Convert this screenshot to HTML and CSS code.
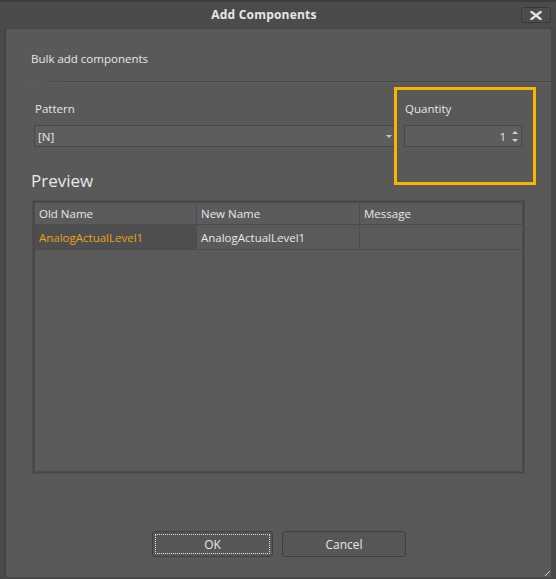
FILE: index.html
```html
<!DOCTYPE html>
<html lang="en">
<head>
    <meta charset="UTF-8">
    <meta name="viewport" content="width=device-width, initial-scale=1.0">
    <title>Add Components</title>
    <link rel="stylesheet" href="styles.css">
</head>
<body>
    <div id="dialog">
        <div id="titlebar">
            <span class="title">Add Components</span>
            <button class="close-btn" title="Close">
                <svg width="12" height="9" viewBox="0 0 12 9">
                    <path d="M1.5 1 L10.5 8 M10.5 1 L1.5 8" stroke="#e2e2e2" stroke-width="2.4" stroke-linecap="square"/>
                </svg>
            </button>
        </div>
        <div id="content">
            <p class="intro">Bulk add components</p>
            <div class="separator"></div>

            <div class="fields">
                <div class="field pattern">
                    <label>Pattern</label>
                    <div class="input combo">
                        <span>[N]</span>
                        <span class="combo-arrow"></span>
                    </div>
                </div>
                <div class="field quantity">
                    <label>Quantity</label>
                    <div class="input spin">
                        <span class="spin-value">1</span>
                        <span class="spin-buttons">
                            <span class="arrow-up"></span>
                            <span class="arrow-down"></span>
                        </span>
                    </div>
                    <div class="highlight"></div>
                </div>
            </div>

            <h2 class="preview-title">Preview</h2>
            <div class="grid">
                <div class="grid-row header">
                    <div class="cell">Old Name</div>
                    <div class="cell">New Name</div>
                    <div class="cell">Message</div>
                </div>
                <div class="grid-row">
                    <div class="cell old">AnalogActualLevel1</div>
                    <div class="cell">AnalogActualLevel1</div>
                    <div class="cell"></div>
                </div>
            </div>

            <div class="actions">
                <button class="btn focused"><span>OK</span></button>
                <button class="btn cancel"><span>Cancel</span></button>
            </div>
            <div class="grip"></div>
        </div>
    </div>
</body>
</html>
```

FILE: styles.css
```css
body {
    margin: 0;
    background-color: #444;
    font-family: "Open Sans", "Noto Sans", Arial, sans-serif;
    font-size: 11.5px;
    color: #e6e8ea;
}
#dialog {
    width: 556px;
    height: 579px;
    display: flex;
    flex-direction: column;
    background-color: #484848;
    border-top: 2px solid #3c3c3c;
    box-sizing: border-box;
}
#titlebar {
    height: 26px;
    display: flex;
    align-items: center;
    justify-content: center;
    position: relative;
    background-color: #4b4b4b;
}
.title {
    font-weight: bold;
    font-size: 12px;
    letter-spacing: 0.2px;
    margin-left: -28px;
    margin-top: -1px;
}
.close-btn {
    position: absolute;
    right: 5px;
    top: 5px;
    width: 30px;
    height: 16px;
    padding: 0;
    display: flex;
    align-items: center;
    justify-content: center;
    background-color: #4d4d4d;
    border: 1px solid #393939;
    border-radius: 3px;
}
#content {
    flex-grow: 1;
    margin: 0 5px 2px 5px;
    background-color: #595959;
    border-left: 1px solid #3f3f3f;
    border-top: 1px solid #454545;
    display: flex;
    flex-direction: column;
    position: relative;
}
.intro {
    margin: 0;
    padding: 22px 0 0 25px;
    line-height: 16px;
}
.separator {
    margin: 14px 0 0 24px;
    height: 1px;
    background: linear-gradient(to right, #595959, #474747 40px);
    border-bottom: 1px solid #5e5e5e;
}
.fields {
    display: flex;
    gap: 9px;
    padding: 18px 0 0 28px;
}
.field label {
    display: block;
    line-height: 16px;
    padding-left: 1px;
    margin-bottom: 8px;
}
.field.pattern {
    width: 361px;
}
.field.quantity {
    width: 118px;
    position: relative;
}
.input {
    height: 20px;
    border: 1px solid #484848;
    background-color: #5d5d5d;
    display: flex;
    align-items: center;
    box-sizing: content-box;
}
.combo {
    padding-left: 3px;
    justify-content: space-between;
}
.combo-arrow {
    width: 0;
    height: 0;
    border-left: 3px solid transparent;
    border-right: 3px solid transparent;
    border-top: 3px solid #c8c8c8;
    margin-right: 2px;
}
.spin {
    justify-content: flex-end;
}
.spin-value {
    margin-right: 6px;
}
.spin-buttons {
    display: flex;
    flex-direction: column;
    gap: 5px;
    margin-right: 3px;
}
.arrow-up,
.arrow-down {
    width: 0;
    height: 0;
    border-left: 3px solid transparent;
    border-right: 3px solid transparent;
}
.arrow-up {
    border-bottom: 3px solid #cfcfcf;
}
.arrow-down {
    border-top: 3px solid #cfcfcf;
}
.highlight {
    position: absolute;
    left: -10px;
    top: -14px;
    width: 136px;
    height: 92px;
    border: 3px solid #f7b500;
}
.preview-title {
    margin: 23px 0 0 25px;
    font-size: 17px;
    font-weight: normal;
    line-height: 22px;
}
.grid {
    margin: 9px 0 0 27px;
    width: 487px;
    height: 268px;
    border: 1px solid #454545;
    box-shadow: 0 0 0 1px #4f4f4f, inset 0 0 0 1px #4d4d4d;
    background-color: #5a5a5a;
    padding: 1px;
}
.grid-row {
    display: grid;
    grid-template-columns: 162px 163px 1fr;
    height: 24px;
    border-bottom: 1px solid #4d4d4d;
}
.grid-row.header {
    height: 21px;
    background-color: #5b5b5b;
    border-bottom: 1px solid #4a4a4a;
}
.cell {
    padding-left: 4px;
    display: flex;
    align-items: center;
    border-right: 1px solid #4d4d4d;
    white-space: nowrap;
}
.cell:last-child {
    border-right: none;
}
.cell.old {
    background-color: #4e4e4e;
    color: #eaa21e;
}
.actions {
    margin-top: auto;
    margin-bottom: 20px;
    display: flex;
    justify-content: center;
    gap: 9px;
    padding-left: 1px;
}
.btn {
    height: 26px;
    padding: 2px;
    border: 1px solid #3e3e3e;
    border-radius: 3px;
    background: linear-gradient(#555, #585858);
    font-family: inherit;
    font-size: 12px;
    color: #e6e8ea;
}
.btn span {
    display: flex;
    align-items: center;
    justify-content: center;
    height: 100%;
    box-sizing: border-box;
}
.btn.focused {
    width: 121px;
}
.btn.focused span {
    border: 1px dotted #e0e0e0;
}
.btn.cancel {
    width: 124px;
}
.grip {
    position: absolute;
    right: 1px;
    bottom: 1px;
    width: 10px;
    height: 10px;
    background: repeating-linear-gradient(135deg, transparent 0 2px, #cfcfcf 2px 3px, transparent 3px 4px);
    clip-path: polygon(100% 0, 100% 100%, 0 100%);
}
```
